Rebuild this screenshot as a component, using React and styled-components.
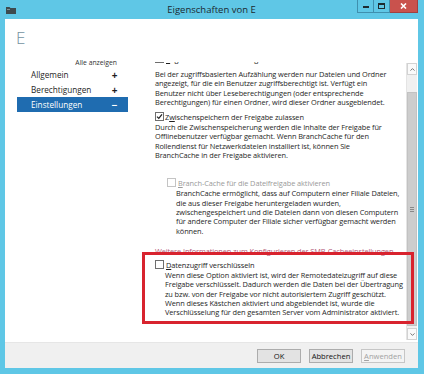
import { useLayoutEffect, useRef } from 'react'
import styled, { createGlobalStyle } from 'styled-components'

const GlobalStyle = createGlobalStyle`
  html, body {
    margin: 0;
    padding: 0;
    background: #fff;
  }
  body {
    font-family: "Open Sans", "Noto Sans", sans-serif;
    color: #1e1e1e;
  }
`

const Window = styled.div`
  width: 424px;
  height: 374px;
  box-sizing: border-box;
  padding: 0 6px 6px 5px;
  background: #5fc7e6;
  display: flex;
  flex-direction: column;
`

const TitleBar = styled.div`
  height: 19px;
  flex-shrink: 0;
  display: grid;
  grid-template-columns: 1fr auto 1fr;
`

const AppIcon = styled.svg`
  margin: 6px 0 0 1px;
`

const Title = styled.div`
  font-size: 9.5px;
  line-height: 19px;
  color: #1b2a30;
`

const Controls = styled.div`
  justify-self: end;
  display: flex;
  height: 13px;
`

const CtrlButton = styled.div`
  width: ${p => p.$w}px;
  box-sizing: border-box;
  border: 1px solid ${p => (p.$close ? '#a04040' : '#3f8fae')};
  border-top: none;
  background: ${p => (p.$close ? '#c9524d' : 'transparent')};
  display: flex;
  align-items: center;
  justify-content: center;
  & + & {
    border-left: none;
  }
`

const Client = styled.div`
  flex: 1;
  min-height: 0;
  background: #fff;
  display: flex;
  flex-direction: column;
`

const Header = styled.div`
  height: 37px;
  flex-shrink: 0;
  box-sizing: border-box;
  padding: 9px 0 0 11px;
  font-size: 17px;
  line-height: 20px;
  font-weight: 300;
  color: #7393a1;
`

const Main = styled.div`
  flex: 1;
  min-height: 0;
  display: flex;
`

const Nav = styled.nav`
  flex-shrink: 0;
  padding: 2px 0 0 12px;
  width: 111px;
  display: flex;
  flex-direction: column;
`

const ShowAll = styled.div`
  font-size: 6.8px;
  line-height: 9px;
  text-align: right;
  padding-right: 11px;
  color: #333;
`

const NavItem = styled.div`
  height: 15px;
  display: flex;
  align-items: center;
  justify-content: space-between;
  padding: 0 10px 0 14px;
  font-size: 8.2px;
  color: ${p => (p.$active ? '#fff' : '#1e1e1e')};
  background: ${p => (p.$active ? '#1f6cb0' : 'transparent')};
`

const NavSign = styled.span`
  font-size: 10px;
  font-weight: 700;
  width: 7px;
  text-align: center;
`

const ContentPane = styled.div`
  position: relative;
  flex: 1;
  min-width: 0;
  margin: 6px 0 0 12px;
  display: flex;
`

const Viewport = styled.div`
  flex: 1;
  min-width: 0;
  overflow: hidden;
  padding: 0 0 40px 15px;
  font-size: 7.4px;
  letter-spacing: -0.1px;
`

const Option = styled.div`
  margin-top: ${p => p.$gap || 0}px;
  padding-left: ${p => p.$indent || 0}px;
`

const Row = styled.div`
  display: flex;
  align-items: center;
  gap: ${p => p.$gap || 2}px;
  height: 11px;
  color: ${p => (p.$disabled ? '#9a9a9a' : '#1e1e1e')};
  white-space: nowrap;
`

const Box = styled.span`
  width: 9px;
  height: 9px;
  box-sizing: border-box;
  flex-shrink: 0;
  border: 1px solid ${p => (p.$disabled ? '#c4c4c4' : '#6e6e6e')};
  background: #fff;
  display: flex;
  align-items: center;
  justify-content: center;
`

const Desc = styled.div`
  margin-top: ${p => p.$top || 1}px;
  padding-left: ${p => p.$indent || 0}px;
  line-height: 9.3px;
  color: #262626;
  white-space: nowrap;
`

const Link = styled.div`
  margin-top: 11px;
  line-height: 9.3px;
  color: #b45a78;
  white-space: nowrap;
`

const Key = styled.span`
  text-decoration: underline;
  text-underline-offset: 1px;
`

const Highlight = styled.div`
  position: absolute;
  top: 190px;
  left: 2px;
  width: 272px;
  height: 72px;
  box-sizing: border-box;
  border: 3px solid #d8232e;
  pointer-events: none;
`

const Scrollbar = styled.div`
  width: 10px;
  margin: 1px 1px 2px 0;
  flex-shrink: 0;
  display: flex;
  flex-direction: column;
  background: #f0f0f0;
  border-left: 1px solid #e4e4e4;
`

const Arrow = styled.div`
  height: 12px;
  box-sizing: border-box;
  border: 1px solid #d2d2d2;
  background: #fafafa;
  display: flex;
  align-items: center;
  justify-content: center;
`

const Track = styled.div`
  flex: 1;
  padding: 17px 0 2px;
  display: flex;
`

const Thumb = styled.div`
  flex: 1;
  background: #cdcdcd;
  border: 1px solid #c2c2c2;
  display: flex;
  align-items: center;
  justify-content: center;
`

const Grip = styled.span`
  width: 4px;
  height: 5px;
  background: repeating-linear-gradient(#888 0 1px, transparent 1px 2px);
`

const Footer = styled.div`
  height: 26px;
  flex-shrink: 0;
  background: #f0f0f0;
  border-top: 1px solid #e6e6e6;
  box-sizing: border-box;
  display: flex;
  align-items: center;
  justify-content: flex-end;
  gap: 8px;
  padding-right: 13px;
`

const Button = styled.div`
  width: 44px;
  height: 14px;
  box-sizing: border-box;
  border: 1px solid ${p => (p.$disabled ? '#c6c6c6' : '#acacac')};
  background: ${p => (p.$disabled ? '#f4f4f4' : '#e3e3e3')};
  color: ${p => (p.$disabled ? '#a2a2a2' : '#111')};
  font-size: 7.6px;
  display: flex;
  align-items: center;
  justify-content: center;
`

const Check = () => (
  <svg width="7" height="7" viewBox="0 0 7 7">
    <path d="M1 3.6 L2.8 5.4 L6 1.4" fill="none" stroke="#222" strokeWidth="1.3" />
  </svg>
)

const Checkbox = ({ checked, disabled }) => (
  <Box $disabled={disabled}>{checked && <Check />}</Box>
)

const Chevron = ({ up }) => (
  <svg width="5" height="3" viewBox="0 0 5 3">
    <path d={up ? 'M0.5 2.6 L2.5 0.6 L4.5 2.6' : 'M0.5 0.4 L2.5 2.4 L4.5 0.4'} fill="none" stroke="#666" strokeWidth="0.9" />
  </svg>
)

const lines = text => text.map(l => <div key={l}>{l}</div>)

export default function App() {
  const viewRef = useRef(null)

  useLayoutEffect(() => {
    if (viewRef.current) viewRef.current.scrollTop = 9
  }, [])

  return (
    <>
      <GlobalStyle />
      <Window>
        <TitleBar>
          <AppIcon width="10" height="8" viewBox="0 0 10 8">
            <path d="M0 1 H3.5 L4.5 2 H10 V8 H0 Z" fill="#3d4b4f" />
            <rect x="1" y="3" width="3" height="1" fill="#7f9196" />
          </AppIcon>
          <Title>Eigenschaften von E</Title>
          <Controls>
            <CtrlButton $w={17}>
              <svg width="6" height="4" viewBox="0 0 6 4">
                <rect x="0" y="2" width="6" height="2" fill="#1d2b30" />
              </svg>
            </CtrlButton>
            <CtrlButton $w={16}>
              <svg width="7" height="6" viewBox="0 0 7 6">
                <rect x="0.5" y="0.5" width="6" height="5" fill="none" stroke="#1d2b30" />
                <rect x="0" y="0" width="7" height="2" fill="#1d2b30" />
              </svg>
            </CtrlButton>
            <CtrlButton $w={28} $close>
              <svg width="7" height="6" viewBox="0 0 7 6">
                <path d="M1 0.5 L6 5.5 M6 0.5 L1 5.5" stroke="#fff" strokeWidth="1.6" />
              </svg>
            </CtrlButton>
          </Controls>
        </TitleBar>

        <Client>
          <Header>E</Header>
          <Main>
            <Nav>
              <ShowAll>Alle anzeigen</ShowAll>
              <NavItem>
                Allgemein <NavSign>+</NavSign>
              </NavItem>
              <NavItem>
                Berechtigungen <NavSign>+</NavSign>
              </NavItem>
              <NavItem $active>
                Einstellungen <NavSign>−</NavSign>
              </NavItem>
            </Nav>

            <ContentPane>
              <Viewport ref={viewRef}>
                <Option>
                  <Row $gap={2}>
                    <Checkbox />
                    <span>
                      <Key>Z</Key>ugriffsbasierte Aufzählung aktivieren
                    </span>
                  </Row>
                  <Desc $top={6}>
                    {lines([
                      'Bei der zugriffsbasierten Aufzählung werden nur Dateien und Ordner',
                      'angezeigt, für die ein Benutzer zugriffsberechtigt ist. Verfügt ein',
                      'Benutzer nicht über Leseberechtigungen (oder entsprechende',
                      'Berechtigungen) für einen Ordner, wird dieser Ordner ausgeblendet.',
                    ])}
                  </Desc>
                </Option>

                <Option $gap={4}>
                  <Row $gap={1}>
                    <Checkbox checked />
                    <span>
                      Z<Key>w</Key>ischenspeichern der Freigabe zulassen
                    </span>
                  </Row>
                  <Desc>
                    {lines([
                      'Durch die Zwischenspeicherung werden die Inhalte der Freigabe für',
                      'Offlinebenutzer verfügbar gemacht. Wenn BranchCache für den',
                      'Rollendienst für Netzwerkdateien installiert ist, können Sie',
                      'BranchCache in der Freigabe aktivieren.',
                    ])}
                  </Desc>
                </Option>

                <Option $gap={17} $indent={12}>
                  <Row $disabled $gap={2}>
                    <Checkbox disabled />
                    <span>
                      <Key>B</Key>ranch-Cache für die Dateifreigabe aktivieren
                    </span>
                  </Row>
                  <Desc $indent={9}>
                    {lines([
                      'BranchCache ermöglicht, dass auf Computern einer Filiale Dateien,',
                      'die aus dieser Freigabe heruntergeladen wurden,',
                      'zwischengespeichert und die Dateien dann von diesen Computern',
                      'für andere Computer der Filiale sicher verfügbar gemacht werden',
                      'können.',
                    ])}
                  </Desc>
                </Option>

                <Link>Weitere Informationen zum Konfigurieren der SMB-Cacheeinstellungen</Link>

                <Option $gap={3}>
                  <Row $gap={2}>
                    <Checkbox />
                    <span>
                      <Key>D</Key>atenzugriff verschlüsseln
                    </span>
                  </Row>
                  <Desc $indent={10}>
                    {lines([
                      'Wenn diese Option aktiviert ist, wird der Remotedateizugriff auf diese',
                      'Freigabe verschlüsselt. Dadurch werden die Daten bei der Übertragung',
                      'zu bzw. von der Freigabe vor nicht autorisiertem Zugriff geschützt.',
                      'Wenn dieses Kästchen aktiviert und abgeblendet ist, wurde die',
                      'Verschlüsselung für den gesamten Server vom Administrator aktiviert.',
                    ])}
                  </Desc>
                </Option>
              </Viewport>

              <Scrollbar>
                <Arrow>
                  <Chevron up />
                </Arrow>
                <Track>
                  <Thumb>
                    <Grip />
                  </Thumb>
                </Track>
                <Arrow>
                  <Chevron />
                </Arrow>
              </Scrollbar>

              <Highlight />
            </ContentPane>
          </Main>

          <Footer>
            <Button>OK</Button>
            <Button>Abbrechen</Button>
            <Button $disabled>
              <span>
                <Key>A</Key>nwenden
              </span>
            </Button>
          </Footer>
        </Client>
      </Window>
    </>
  )
}
